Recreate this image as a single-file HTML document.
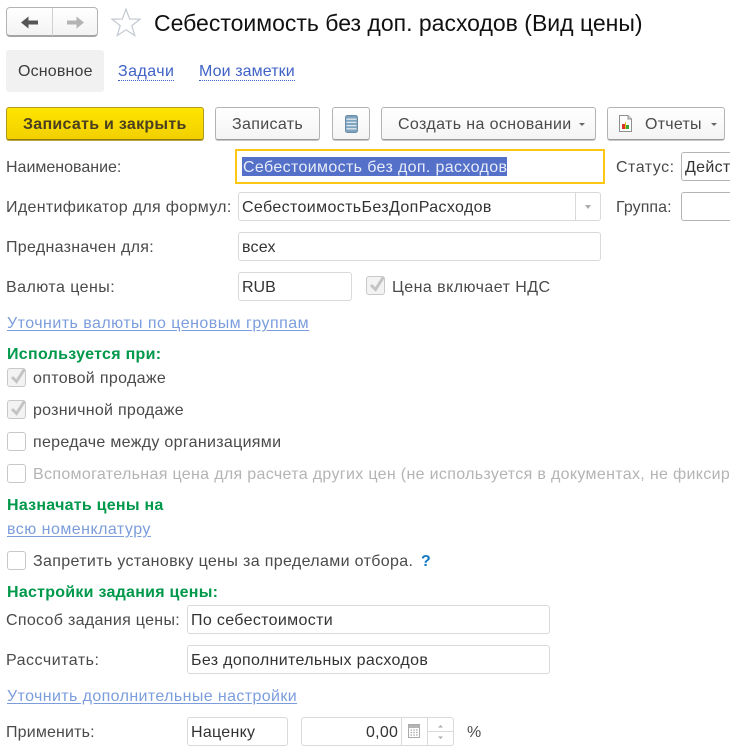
<!DOCTYPE html>
<html lang="ru"><head><meta charset="utf-8"><title>Себестоимость без доп. расходов (Вид цены)</title>
<style>
html,body{margin:0;padding:0;background:#fff;overflow:hidden}
html{width:730px;height:750px}
body{width:730px;height:750px;position:relative;overflow:hidden;font-family:"Liberation Sans","DejaVu Sans",sans-serif;font-size:16px;color:#4a4a4a}
.t{position:absolute;white-space:nowrap;line-height:18px;margin-top:2px}
.b{position:absolute;box-sizing:border-box;height:33px;top:107px;border:1px solid #b4b4b4;border-bottom-color:#9a9a9a;border-radius:3px;background:linear-gradient(#fff,#f4f4f4);box-shadow:0 1px 0 #c8c8c8;line-height:33px;color:#4a4a4a;white-space:nowrap}
.f{position:absolute;box-sizing:border-box;height:29px;border:1px solid #d9d9d9;border-radius:3px;background:#fff;color:#333;line-height:28px;padding-left:3px;padding-top:1px;white-space:nowrap;overflow:hidden}
.c{position:absolute;left:7px;width:19px;height:19px;box-sizing:border-box;border:1px solid #c8c8c8;border-radius:3px;background:#fff}
.c svg{position:absolute;left:1px;top:-3px}
.c.on{background:#f3f3f3}
.g{color:#00984a;font-weight:bold}
.l{color:#7b9ddc;text-decoration:underline;text-underline-offset:2px}
.d{position:absolute;width:0;height:0;border-left:3px solid transparent;border-right:3px solid transparent;border-top:3px solid #666}
</style></head><body>

<!-- nav -->
<div style="position:absolute;left:6px;top:7px;width:92px;height:30px;box-sizing:border-box;border:1px solid #b4b4b4;border-bottom:2px solid #a4a4a4;border-radius:4px;background:linear-gradient(#fff,#f3f3f3)"></div>
<div style="position:absolute;left:52px;top:8px;width:1px;height:28px;background:#d0d0d0"></div>
<svg style="position:absolute;left:20px;top:14px" width="20" height="17" viewBox="0 0 20 17"><path d="M1 8.5 L8.5 2.5 V6.5 H18 V10.5 H8.5 V14.5 Z" fill="#555"/></svg>
<svg style="position:absolute;left:65px;top:14px" width="20" height="17" viewBox="0 0 20 17"><path d="M19 8.5 L11.5 2.5 V6.5 H2 V10.5 H11.5 V14.5 Z" fill="#b4b4b4"/></svg>
<svg style="position:absolute;left:110px;top:7px" width="32" height="30" viewBox="0 0 32 30"><path d="M16 2 L19.6 12 L30 12.2 L21.8 18.6 L24.8 28.6 L16 22.8 L7.2 28.6 L10.2 18.6 L2 12.2 L12.4 12 Z" fill="#fff" stroke="#c3c9d0" stroke-width="1.2"/></svg>
<div class="t" style="left:154px;top:7px;font-size:23px;line-height:28px;color:#111">Себестоимость без доп. расходов (Вид цены)</div>

<!-- tabs -->
<div style="position:absolute;left:6px;top:50px;width:98px;height:42px;background:#f1f1f1;border-radius:3px"></div>
<div class="t" style="left:18px;top:61px;color:#3c3c3c;letter-spacing:.17px">Основное</div>
<div class="t" style="left:118px;top:62px;color:#3f62c6;border-bottom:1px dotted #3f62c6;line-height:16px;letter-spacing:.45px">Задачи</div>
<div class="t" style="left:199px;top:62px;color:#3f62c6;border-bottom:1px dotted #3f62c6;line-height:16px;letter-spacing:.1px">Мои заметки</div>

<!-- buttons -->
<div class="b" style="left:6px;width:198px;background:linear-gradient(#ffe500,#f2d000);border-color:#b09a20;border-bottom-color:#8f7c10;box-shadow:0 1px 0 #b8a63c;font-weight:bold;color:#4a4020;padding-left:16px;letter-spacing:.28px">Записать и закрыть</div>
<div class="b" style="left:215px;width:105px;padding-left:16px;letter-spacing:.33px">Записать</div>
<div class="b" style="left:332px;width:38px"></div>
<svg style="position:absolute;left:345px;top:115px" width="13" height="18" viewBox="0 0 13 18"><rect x="0.5" y="0.5" width="12" height="17" rx="2" fill="#7fa4c0" stroke="#6a8ca6"/><path d="M1.5 4.2H11.5M1.5 7.4H11.5M1.5 10.6H11.5M1.5 13.8H11.5" stroke="#dbe6ee" stroke-width="1.3"/></svg>
<div class="b" style="left:381px;width:215px;padding-left:16px;letter-spacing:.38px">Создать на основании</div>
<div class="d" style="left:579px;top:123px"></div>
<div class="b" style="left:607px;width:118px;padding-left:37px;letter-spacing:.25px">Отчеты</div>
<svg style="position:absolute;left:618px;top:114px" width="15" height="19" viewBox="0 0 15 19"><path d="M1.5 1.5H10L13.5 5V17.5H1.5Z" fill="#fff" stroke="#8f8f8f"/><path d="M10 1.5V5H13.5" fill="#ddd" stroke="#8f8f8f"/><rect x="4" y="10" width="3" height="5" fill="#d8382a"/><rect x="7" y="8" width="1" height="7" fill="#e8c020"/><rect x="8" y="11" width="3" height="4" fill="#3aa63a"/></svg>
<div class="d" style="left:711px;top:123px"></div>

<!-- row 1 -->
<div class="t" style="left:6px;top:157px">Наименование:</div>
<div style="position:absolute;left:235px;top:149px;width:370px;height:35px;box-sizing:border-box;border:2px solid #fcc814;background:#fff"></div>
<div class="t" style="left:242px;top:155px;height:19px;line-height:21px;background:#5470c8;color:#e8ecf8;width:265px;padding-left:1px;box-sizing:border-box;letter-spacing:.36px;overflow:hidden">Себестоимость без доп. расходов</div>
<div class="t" style="left:616px;top:157px;letter-spacing:.5px">Статус:</div>
<div class="f" style="left:681px;top:152px;width:49px;border-color:#b4b4b4;border-right:0;border-radius:3px 0 0 3px;color:#333;letter-spacing:.3px">Действует</div>

<!-- row 2 -->
<div class="t" style="left:6px;top:197px;letter-spacing:.32px">Идентификатор для формул:</div>
<div class="f" style="left:238px;top:192px;width:363px;letter-spacing:.37px">СебестоимостьБезДопРасходов</div>
<div style="position:absolute;left:575px;top:193px;width:1px;height:27px;background:#d9d9d9"></div>
<div class="d" style="left:585px;top:205px;border-top-color:#aaa;border-top-width:4px;border-left-width:3.5px;border-right-width:3.5px"></div>
<div class="t" style="left:616px;top:197px;letter-spacing:.07px">Группа:</div>
<div class="f" style="left:681px;top:192px;width:49px;border-color:#b4b4b4;border-right:0;border-radius:3px 0 0 3px"></div>

<!-- row 3 -->
<div class="t" style="left:6px;top:237px;letter-spacing:.3px">Предназначен для:</div>
<div class="f" style="left:238px;top:232px;width:363px;letter-spacing:.2px">всех</div>

<!-- row 4 -->
<div class="t" style="left:6px;top:277px;letter-spacing:.45px">Валюта цены:</div>
<div class="f" style="left:238px;top:272px;width:114px">RUB</div>
<div class="c on" style="left:366px;top:276px"><svg width="19" height="20" viewBox="0 0 19 20"><path d="M3 11 L7.5 15.5 L15.5 3" fill="none" stroke="#c4c4c4" stroke-width="3"/></svg></div>
<div class="t" style="left:392px;top:277px;letter-spacing:.45px">Цена включает НДС</div>

<div class="t l" style="left:7px;top:313px;letter-spacing:.46px">Уточнить валюты по ценовым группам</div>
<div class="t g" style="left:7px;top:344px;letter-spacing:.3px">Используется при:</div>

<div class="c on" style="top:368px"><svg width="19" height="20" viewBox="0 0 19 20"><path d="M3 11 L7.5 15.5 L15.5 3" fill="none" stroke="#c4c4c4" stroke-width="3"/></svg></div>
<div class="t" style="left:33px;top:368px;letter-spacing:.33px">оптовой продаже</div>
<div class="c on" style="top:400px"><svg width="19" height="20" viewBox="0 0 19 20"><path d="M3 11 L7.5 15.5 L15.5 3" fill="none" stroke="#c4c4c4" stroke-width="3"/></svg></div>
<div class="t" style="left:33px;top:400px;letter-spacing:.28px">розничной продаже</div>
<div class="c" style="top:432px"></div>
<div class="t" style="left:33px;top:432px;letter-spacing:.31px">передаче между организациями</div>
<div class="c" style="top:464px"></div>
<div class="t" style="left:33px;top:464px;width:697px;overflow:hidden;color:#b4b4b4;letter-spacing:.33px">Вспомогательная цена для расчета других цен (не используется в документах, не фиксируется)</div>

<div class="t g" style="left:7px;top:495px;letter-spacing:.26px">Назначать цены на</div>
<div class="t l" style="left:7px;top:519px;letter-spacing:.47px">всю номенклатуру</div>
<div class="c" style="top:551px"></div>
<div class="t" style="left:33px;top:551px;letter-spacing:.35px">Запретить установку цены за пределами отбора.</div>
<div class="t" style="left:421px;top:551px;color:#1478c0;font-weight:bold">?</div>

<div class="t g" style="left:7px;top:582px;letter-spacing:.26px">Настройки задания цены:</div>
<div class="t" style="left:6px;top:610px;letter-spacing:.31px">Способ задания цены:</div>
<div class="f" style="left:187px;top:605px;width:363px;letter-spacing:.34px">По себестоимости</div>
<div class="t" style="left:6px;top:650px;letter-spacing:.5px">Рассчитать:</div>
<div class="f" style="left:187px;top:645px;width:363px;letter-spacing:.33px">Без дополнительных расходов</div>
<div class="t l" style="left:7px;top:686px;letter-spacing:.39px">Уточнить дополнительные настройки</div>

<div class="t" style="left:6px;top:722px;letter-spacing:.16px">Применить:</div>
<div class="f" style="left:187px;top:717px;width:101px;letter-spacing:.28px">Наценку</div>
<div class="f" style="left:301px;top:717px;width:153px"></div>
<div class="t" style="left:366px;top:722px;color:#333;letter-spacing:.25px">0,00</div>
<div style="position:absolute;left:401px;top:718px;width:1px;height:27px;background:#d9d9d9"></div>
<div style="position:absolute;left:427px;top:718px;width:1px;height:27px;background:#d9d9d9"></div>
<div style="position:absolute;left:428px;top:731px;width:25px;height:1px;background:#d9d9d9"></div>
<svg style="position:absolute;left:408px;top:724px" width="12" height="14" viewBox="0 0 12 14"><rect x="0.5" y="0.5" width="11" height="13" fill="#fff" stroke="#aaa"/><rect x="1" y="1" width="10" height="3" fill="#b4b4b4"/><path d="M2.5 6H4M5.3 6H6.8M8 6H9.5M2.5 8.5H4M5.3 8.5H6.8M8 8.5H9.5M2.5 11H4M5.3 11H6.8M8 11H9.5" stroke="#aaa" stroke-width="1.2"/></svg>
<svg style="position:absolute;left:437px;top:724px" width="7" height="17" viewBox="0 0 7 17"><path d="M1 3.5H6L3.5 1Z" fill="#aaa"/><path d="M1 12.5H6L3.5 15Z" fill="#aaa"/></svg>
<div class="t" style="left:467px;top:722px">%</div>
</body></html>
